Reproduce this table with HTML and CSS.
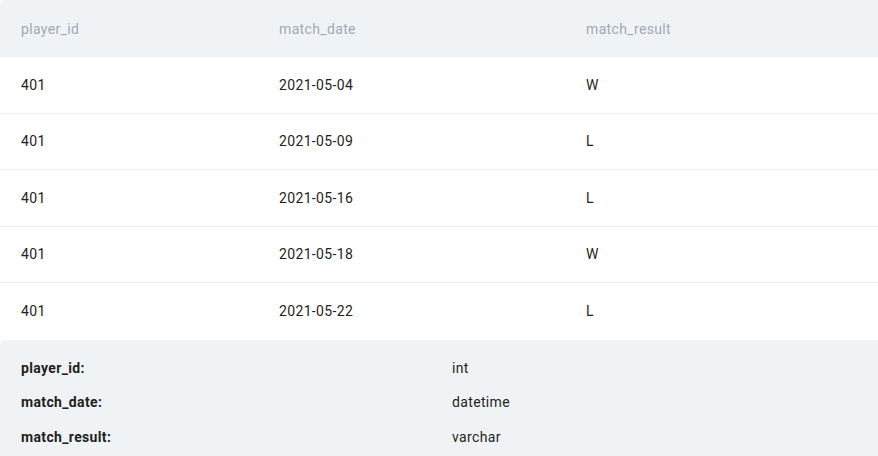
FILE: index.html
```html
<!DOCTYPE html>
<html>
<head>
<meta charset="utf-8">
<link rel="stylesheet" href="styles.css">
</head>
<body>
<div class="wrap">
  <table class="data">
    <thead>
      <tr><th class="c1">player_id</th><th class="c2">match_date</th><th class="c3">match_result</th></tr>
    </thead>
    <tbody>
      <tr><td>401</td><td>2021-05-04</td><td>W</td></tr>
      <tr><td>401</td><td>2021-05-09</td><td>L</td></tr>
      <tr><td>401</td><td>2021-05-16</td><td>L</td></tr>
      <tr><td>401</td><td>2021-05-18</td><td>W</td></tr>
      <tr class="last"><td>401</td><td>2021-05-22</td><td>L</td></tr>
    </tbody>
  </table>
  <div class="schema">
    <div class="srow"><span class="name">player_id:</span><span class="type">int</span></div>
    <div class="srow"><span class="name">match_date:</span><span class="type">datetime</span></div>
    <div class="srow"><span class="name">match_result:</span><span class="type">varchar</span></div>
  </div>
</div>
</body>
</html>
```
FILE: styles.css
```css
html, body {
  margin: 0;
  padding: 0;
  background: #ffffff;
}
body {
  font-family: Roboto, "Liberation Sans", sans-serif;
  font-size: 14px;
  letter-spacing: 0.35px;
  color: #1e1f21;
}
.wrap {
  width: 878px;
}
.data {
  width: 100%;
  border-collapse: separate;
  border-spacing: 0;
  table-layout: fixed;
}
.data th {
  background: #f0f3f6;
  color: #a2a9b4;
  font-weight: 400;
  text-align: left;
  height: 57px;
  padding: 0 0 0 21px;
  box-sizing: border-box;
}
.data th.c1 { width: 258px; border-top-left-radius: 5px; }
.data th.c2 { width: 307px; }
.data td {
  height: 56.5px;
  padding: 0 0 0 21px;
  box-sizing: border-box;
  border-bottom: 1px solid #eceef2;
}
.data tr.last td {
  border-bottom: none;
}
.schema {
  background: #f0f3f6;
  border-top-left-radius: 5px;
  padding-top: 11px;
  height: 106px;
}
.srow {
  display: flex;
  height: 34.5px;
  align-items: center;
}
.name {
  width: 431px;
  padding-left: 21px;
  font-weight: 700;
}
.type {
  font-weight: 400;
}
```
